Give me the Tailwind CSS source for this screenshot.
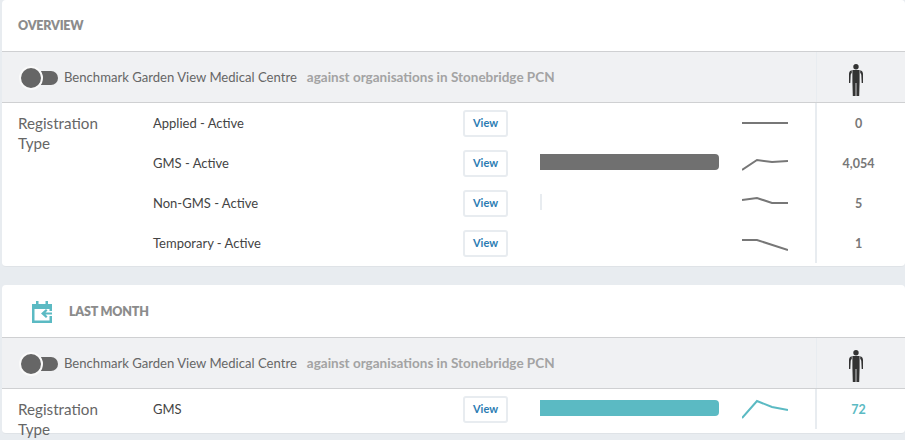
<!DOCTYPE html>
<html lang="en">
<head>
    <meta charset="UTF-8">
    <title>Overview</title>
    <script src="https://cdn.jsdelivr.net/npm/@tailwindcss/browser@4"></script>
</head>
<body class="bg-[#e8ecf0] h-[440px] overflow-hidden font-['Lato','Liberation_Sans',sans-serif] text-[#555]">
    <div class="pl-[2px]">
        <!-- overview card -->
        <section class="bg-white h-[267px] rounded-[4px] overflow-hidden border-b border-[#dfe3e7]">
            <div class="h-[51px] flex items-center pl-4 pt-[2px] text-[12.5px] font-extrabold tracking-[-0.2px] text-[#8c8c8c]">OVERVIEW</div>
            <div class="h-[52px] bg-[#f0f1f3] border-y border-[#cfd0d2] flex items-center pl-[17px]">
                <div class="relative w-[40px] h-[26px] shrink-0">
                    <div class="absolute left-[20px] top-[7px] w-[19px] h-[14px] bg-[#666] rounded-r-full"></div>
                    <div class="absolute left-0 top-[2px] w-[24px] h-[24px] bg-[#666] rounded-full border-2 border-[#fafafa]"></div>
                </div>
                <span class="ml-[5px] mt-[1px] text-[13.1px] text-[#666]">Benchmark Garden View Medical Centre</span>
                <span class="ml-[10px] mt-[1px] text-[13.5px] font-bold text-[#a3a3a3]">against organisations in Stonebridge PCN</span>
                <div class="ml-auto w-[89px] h-full border-l border-[#e8ecf0] flex items-center justify-center pr-[10px]">
                    <svg class="mt-[5px]" width="14" height="32" viewBox="0 0 14 32" fill="#333"><circle cx="7" cy="2.8" r="2.7"/><path d="M3.4 6H10.6V18L10.2 32H7.4V19H6.6V32H3.8L3.4 18z"/><path d="M2.8 6.2C1 6.7 0 8 0 10V19H1.3L1.7 11C1.8 10 2.2 9.3 2.8 9z"/><path d="M11.2 6.2C13 6.7 14 8 14 10V19H12.7L12.3 11C12.2 10 11.8 9.3 11.2 9z"/></svg>
                </div>
            </div>
            <div class="grid grid-cols-[135px_310px_45px_32px_179px_23px_46px_27px_1fr] grid-rows-[40px_40px_40px_40px] pl-4 items-center">
                <div class="row-span-4 self-start pt-[10px] text-[15.2px] leading-[20px] text-[#666]">Registration<br>Type</div>

                <div class="mt-[1px] text-[13px] text-[#444]">Applied - Active</div>
                <a class="h-[27px] flex items-center justify-center rounded-[3px] border-2 border-[#e8ecf0] text-[11px] font-bold text-[#2b7cb3]">View</a>
                <svg class="col-start-7 row-start-1" width="46" height="20" viewBox="0 0 46 20" fill="none" stroke="#777" stroke-width="2"><path d="M0 10H46"/></svg>
                <div class="col-start-9 row-start-1 h-full border-l-2 border-[#e8ecf0] flex items-center justify-center pr-[5px] pt-[2px] text-[12.5px] font-bold text-[#777]">0</div>

                <div class="col-start-2 row-start-2 mt-[1px] text-[13px] text-[#444]">GMS - Active</div>
                <a class="col-start-3 row-start-2 h-[27px] flex items-center justify-center rounded-[3px] border-2 border-[#e8ecf0] text-[11px] font-bold text-[#2b7cb3]">View</a>
                <div class="col-start-5 row-start-2 self-start mt-[11px] h-[16px] bg-[#707070] rounded-r-[4px]"></div>
                <svg class="col-start-7 row-start-2" width="46" height="20" viewBox="0 0 46 20" fill="none" stroke="#777" stroke-width="2"><path d="M0 17L15 7L30 9L46 8"/></svg>
                <div class="col-start-9 row-start-2 h-full border-l-2 border-[#e8ecf0] flex items-center justify-center pr-[5px] pt-[2px] text-[12.5px] font-bold text-[#777]">4,054</div>

                <div class="col-start-2 row-start-3 mt-[1px] text-[13px] text-[#444]">Non-GMS - Active</div>
                <a class="col-start-3 row-start-3 h-[27px] flex items-center justify-center rounded-[3px] border-2 border-[#e8ecf0] text-[11px] font-bold text-[#2b7cb3]">View</a>
                <div class="col-start-5 row-start-3 self-start mt-[11px] h-[16px] w-[2px] bg-[#e8ecf0]"></div>
                <svg class="col-start-7 row-start-3" width="46" height="20" viewBox="0 0 46 20" fill="none" stroke="#777" stroke-width="2"><path d="M0 7L15 5L30 10L46 10"/></svg>
                <div class="col-start-9 row-start-3 h-full border-l-2 border-[#e8ecf0] flex items-center justify-center pr-[5px] pt-[2px] text-[12.5px] font-bold text-[#777]">5</div>

                <div class="col-start-2 row-start-4 mt-[1px] text-[13px] text-[#444]">Temporary - Active</div>
                <a class="col-start-3 row-start-4 h-[27px] flex items-center justify-center rounded-[3px] border-2 border-[#e8ecf0] text-[11px] font-bold text-[#2b7cb3]">View</a>
                <svg class="col-start-7 row-start-4" width="46" height="20" viewBox="0 0 46 20" fill="none" stroke="#777" stroke-width="2"><path d="M0 7L15 7L46 17"/></svg>
                <div class="col-start-9 row-start-4 h-full border-l-2 border-[#e8ecf0] flex items-center justify-center pr-[5px] pt-[2px] text-[12.5px] font-bold text-[#777]">1</div>
            </div>
        </section>

        <!-- last month card -->
        <section class="mt-[18px] bg-white h-[149px] rounded-[4px] border-b border-[#dfe3e7]">
            <div class="h-[52px] flex items-center pl-[30px] text-[12.5px] font-extrabold tracking-[-0.2px] text-[#8c8c8c]">
                <svg class="mt-[1px]" width="20" height="22" viewBox="0 0 20 22" fill="#5bbac3"><path d="M0 3H4V0H6.5V3H13.5V0H16V3H20V10H17.5V8H2.5V19.5H17.5V15H20V22H0z"/><path d="M20 11.5H13.5L15.5 9.5L14 8L9 12.5L14 17L15.5 15.5L13.5 13.5H20z"/></svg>
                <span class="ml-[17px] mt-[2px]">LAST MONTH</span>
            </div>
            <div class="h-[52px] bg-[#f0f1f3] border-y border-[#cfd0d2] flex items-center pl-[17px]">
                <div class="relative w-[40px] h-[26px] shrink-0">
                    <div class="absolute left-[20px] top-[7px] w-[19px] h-[14px] bg-[#666] rounded-r-full"></div>
                    <div class="absolute left-0 top-[2px] w-[24px] h-[24px] bg-[#666] rounded-full border-2 border-[#fafafa]"></div>
                </div>
                <span class="ml-[5px] mt-[1px] text-[13.1px] text-[#666]">Benchmark Garden View Medical Centre</span>
                <span class="ml-[10px] mt-[1px] text-[13.5px] font-bold text-[#a3a3a3]">against organisations in Stonebridge PCN</span>
                <div class="ml-auto w-[89px] h-full border-l border-[#e8ecf0] flex items-center justify-center pr-[10px]">
                    <svg class="mt-[5px]" width="14" height="32" viewBox="0 0 14 32" fill="#333"><circle cx="7" cy="2.8" r="2.7"/><path d="M3.4 6H10.6V18L10.2 32H7.4V19H6.6V32H3.8L3.4 18z"/><path d="M2.8 6.2C1 6.7 0 8 0 10V19H1.3L1.7 11C1.8 10 2.2 9.3 2.8 9z"/><path d="M11.2 6.2C13 6.7 14 8 14 10V19H12.7L12.3 11C12.2 10 11.8 9.3 11.2 9z"/></svg>
                </div>
            </div>
            <div class="grid grid-cols-[135px_310px_45px_32px_179px_23px_46px_27px_1fr] grid-rows-[40px] pl-4 items-center">
                <div class="self-start pt-[10px] text-[15.2px] leading-[20px] text-[#666] h-[40px]">Registration<br>Type</div>
                <div class="mt-[1px] text-[13px] text-[#444]">GMS</div>
                <a class="h-[27px] flex items-center justify-center rounded-[3px] border-2 border-[#e8ecf0] text-[11px] font-bold text-[#2b7cb3]">View</a>
                <div class="col-start-5 self-start mt-[11px] h-[16px] bg-[#5bbac3] rounded-r-[4px]"></div>
                <svg class="col-start-7" width="46" height="20" viewBox="0 0 46 20" fill="none" stroke="#5bbac3" stroke-width="2"><path d="M0 19L15 2L30 8L46 11"/></svg>
                <div class="col-start-9 h-full border-l-2 border-[#e8ecf0] flex items-center justify-center pr-[5px] pt-[2px] text-[12.5px] font-bold text-[#5bbac3]">72</div>
            </div>
        </section>
    </div>
</body>
</html>
